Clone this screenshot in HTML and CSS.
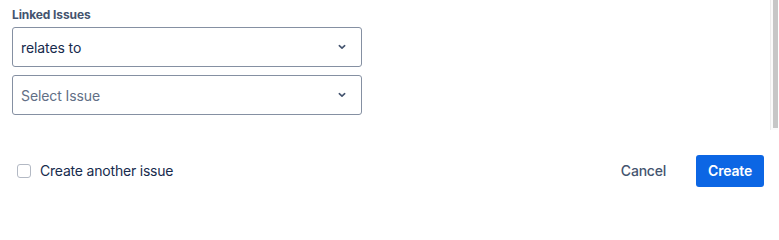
FILE: index.html
```html
<!DOCTYPE html>
<html lang="en">
<head>
<meta charset="utf-8">
<title>Linked Issues</title>
<link rel="stylesheet" href="styles.css">
</head>
<body>
<div class="modal">
  <div class="scroll">
    <div class="form">
      <label class="label">Linked Issues</label>
      <div class="select">
        <span class="value">relates to</span>
        <svg class="chev" width="24" height="24" viewBox="0 0 24 24"><path d="M9.3 10.7 12 13.2l2.7-2.5" fill="none" stroke="#44546f" stroke-width="1.6" stroke-linecap="round" stroke-linejoin="round"/></svg>
      </div>
      <div class="select">
        <span class="placeholder">Select Issue</span>
        <svg class="chev" width="24" height="24" viewBox="0 0 24 24"><path d="M9.3 10.7 12 13.2l2.7-2.5" fill="none" stroke="#44546f" stroke-width="1.6" stroke-linecap="round" stroke-linejoin="round"/></svg>
      </div>
    </div>
    <div class="scrollbar"><div class="thumb"></div></div>
  </div>
  <div class="footer">
    <label class="check">
      <span class="box"></span>
      <span class="check-text">Create another issue</span>
    </label>
    <div class="actions">
      <button class="btn subtle">Cancel</button>
      <button class="btn primary">Create</button>
    </div>
  </div>
</div>
</body>
</html>
```

FILE: styles.css
```css
html, body {
  margin: 0;
  padding: 0;
  background: #ffffff;
}
body {
  font-family: Inter, "Noto Sans", "Liberation Sans", sans-serif;
  color: #172b4d;
  width: 779px;
  height: 203px;
  overflow: hidden;
}
.modal {
  display: flex;
  flex-direction: column;
  height: 203px;
}
.scroll {
  height: 130px;
  flex: none;
  display: flex;
}
.form {
  flex: 1;
  display: flex;
  flex-direction: column;
  gap: 8px;
  padding: 7px 0 0 12px;
}
.scrollbar {
  width: 5px;
  margin-right: 1px;
  border-left: 1px solid #ececec;
  background: #fafafa;
  display: flex;
  padding-left: 2px;
}
.thumb {
  flex: 1;
  background: #c6c6c6;
  margin-bottom: 2px;
}
.label {
  font-size: 12px;
  font-weight: 700;
  color: #44546f;
  line-height: 16px;
  margin-bottom: -4px;
  letter-spacing: -0.1px;
}
.select {
  box-sizing: border-box;
  width: 350px;
  height: 40px;
  border: 1px solid #8590a2;
  border-radius: 3px;
  display: flex;
  align-items: center;
  justify-content: space-between;
  padding: 0 7px 0 8px;
  font-size: 14px;
  letter-spacing: -0.1px;
}
.value { color: #172b4d; }
.placeholder { color: #626f86; }
.chev { flex: none; }
.footer {
  flex: 1;
  display: flex;
  align-items: center;
  justify-content: space-between;
  padding: 8px 15px 0 17px;
}
.check {
  display: flex;
  align-items: center;
  gap: 9px;
  font-size: 14px;
  color: #172b4d;
  letter-spacing: -0.2px;
}
.box {
  box-sizing: border-box;
  width: 14px;
  height: 14px;
  border: 1.5px solid #b3b9c4;
  border-radius: 3px;
  background: #fff;
}
.actions {
  display: flex;
  align-items: center;
  gap: 18px;
}
.btn {
  font-family: inherit;
  font-size: 14px;
  height: 32px;
  border: 0;
  border-radius: 3px;
  padding: 0 12px;
  letter-spacing: -0.2px;
}
.subtle {
  background: transparent;
  color: #44546f;
  font-weight: 500;
}
.primary {
  background: #0c66e4;
  color: #ffffff;
  font-weight: 600;
  padding: 0 12px;
}
```
